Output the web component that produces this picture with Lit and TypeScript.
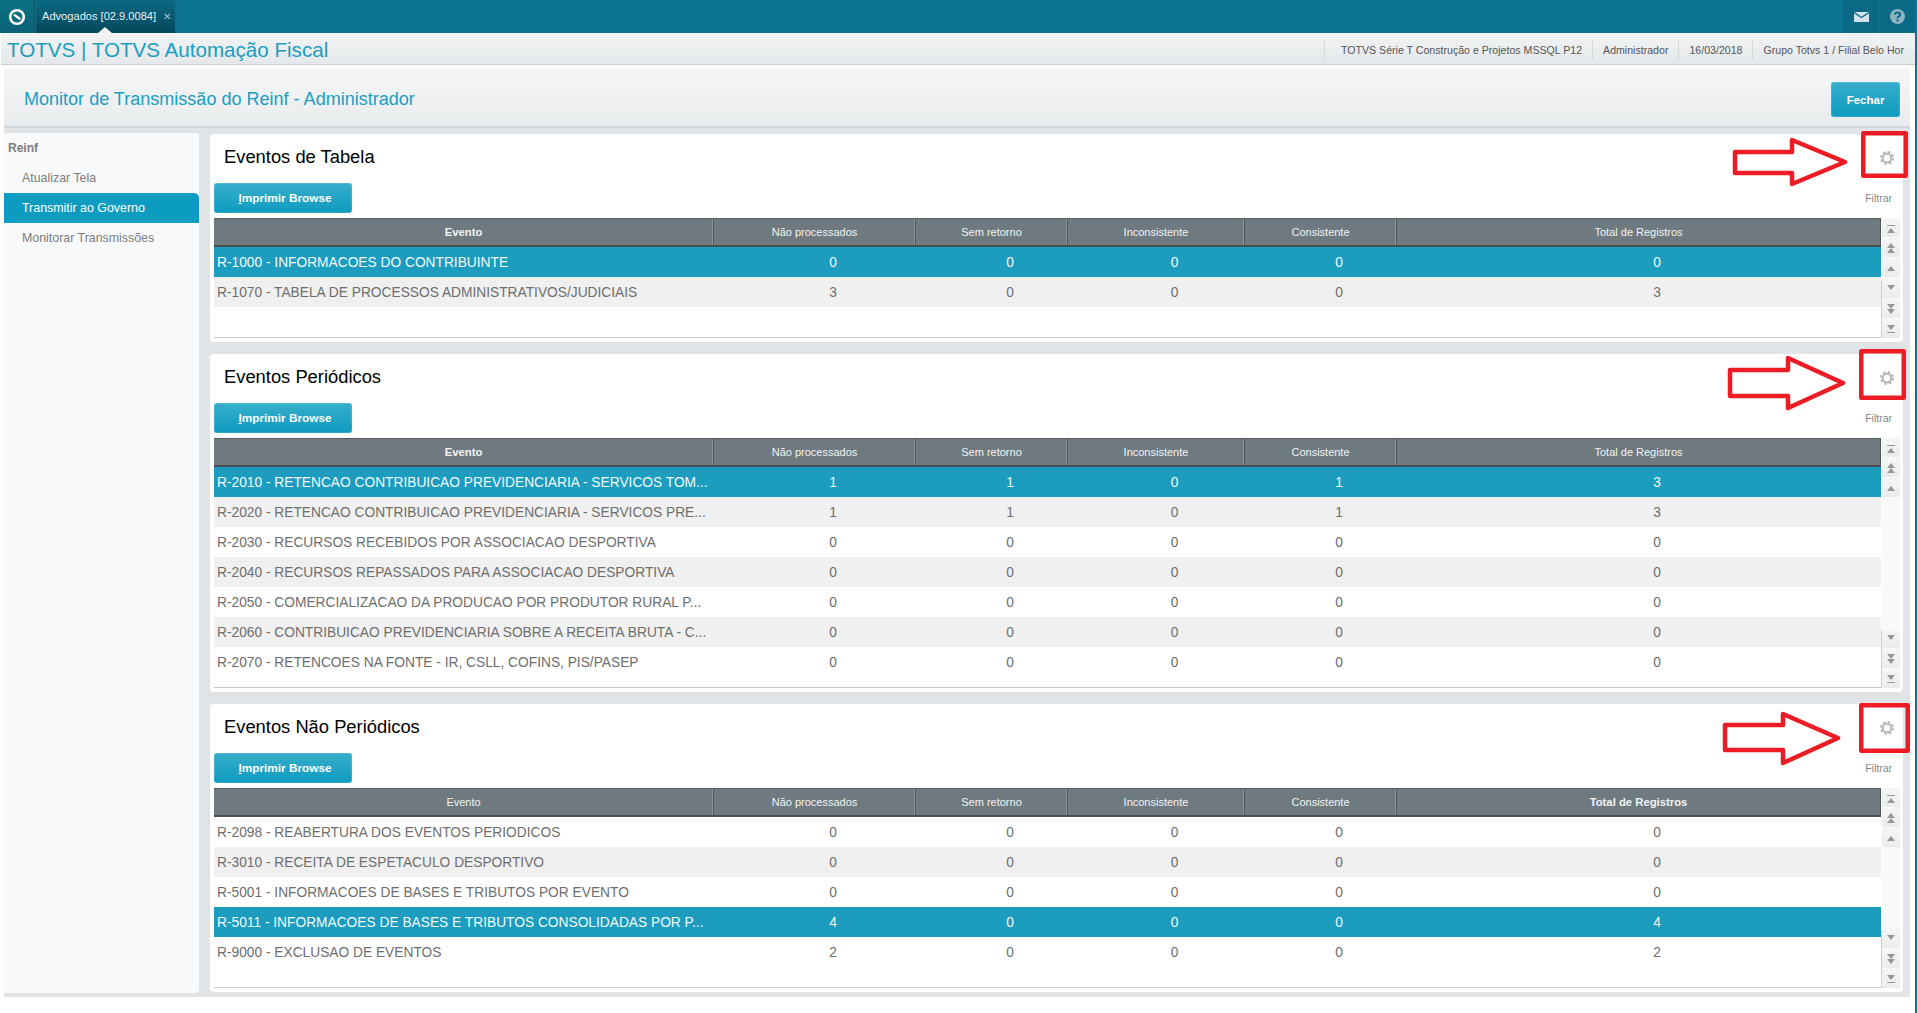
import { LitElement, html, css, svg } from "lit";
import { customElement } from "lit/decorators.js";

type Row = { name: string; vals: number[]; sel?: boolean };
type Card = { title: string; rows: Row[]; bodyH: number; boldCol: number };

const COLS = ["Evento", "Não processados", "Sem retorno", "Inconsistente", "Consistente", "Total de Registros"];

const CARDS: Card[] = [
  {
    title: "Eventos de Tabela", bodyH: 91, boldCol: 0,
    rows: [
      { name: "R-1000 - INFORMACOES DO CONTRIBUINTE", vals: [0, 0, 0, 0, 0], sel: true },
      { name: "R-1070 - TABELA DE PROCESSOS ADMINISTRATIVOS/JUDICIAIS", vals: [3, 0, 0, 0, 3] },
    ],
  },
  {
    title: "Eventos Periódicos", bodyH: 221, boldCol: 0,
    rows: [
      { name: "R-2010 - RETENCAO CONTRIBUICAO PREVIDENCIARIA - SERVICOS TOM...", vals: [1, 1, 0, 1, 3], sel: true },
      { name: "R-2020 - RETENCAO CONTRIBUICAO PREVIDENCIARIA - SERVICOS PRE...", vals: [1, 1, 0, 1, 3] },
      { name: "R-2030 - RECURSOS RECEBIDOS POR ASSOCIACAO DESPORTIVA", vals: [0, 0, 0, 0, 0] },
      { name: "R-2040 - RECURSOS REPASSADOS PARA ASSOCIACAO DESPORTIVA", vals: [0, 0, 0, 0, 0] },
      { name: "R-2050 - COMERCIALIZACAO DA PRODUCAO POR PRODUTOR RURAL P...", vals: [0, 0, 0, 0, 0] },
      { name: "R-2060 - CONTRIBUICAO PREVIDENCIARIA SOBRE A RECEITA BRUTA - C...", vals: [0, 0, 0, 0, 0] },
      { name: "R-2070 - RETENCOES NA FONTE - IR, CSLL, COFINS, PIS/PASEP", vals: [0, 0, 0, 0, 0] },
    ],
  },
  {
    title: "Eventos Não Periódicos", bodyH: 171, boldCol: 5,
    rows: [
      { name: "R-2098 - REABERTURA DOS EVENTOS PERIODICOS", vals: [0, 0, 0, 0, 0] },
      { name: "R-3010 - RECEITA DE ESPETACULO DESPORTIVO", vals: [0, 0, 0, 0, 0] },
      { name: "R-5001 - INFORMACOES DE BASES E TRIBUTOS POR EVENTO", vals: [0, 0, 0, 0, 0] },
      { name: "R-5011 - INFORMACOES DE BASES E TRIBUTOS CONSOLIDADAS POR P...", vals: [4, 0, 0, 0, 4], sel: true },
      { name: "R-9000 - EXCLUSAO DE EVENTOS", vals: [2, 0, 0, 0, 2] },
    ],
  },
];

const tri = (y: number, up: boolean) =>
  up ? svg`<polygon points="5,${y + 5} 13,${y + 5} 9,${y}" />` : svg`<polygon points="5,${y} 13,${y} 9,${y + 5}" />`;

const SCROLL_ICONS = {
  first: svg`<rect x="5" y="7" width="8" height="1" />${tri(10, true)}`,
  pgup: svg`${tri(5, true)}${tri(10, true)}`,
  up: svg`${tri(8, true)}`,
  down: svg`${tri(6, false)}`,
  pgdn: svg`${tri(5, false)}${tri(10, false)}`,
  last: svg`${tri(6, false)}<rect x="5" y="13" width="8" height="1" />`,
};

@customElement("app-root")
export class AppRoot extends LitElement {
  static styles = css`
    :host {
      display: block;
      position: relative;
      width: 1917px;
      height: 1013px;
      overflow: hidden;
      background: #fff;
      font-family: "Liberation Sans", Arial, sans-serif;
    }
    .top {
      height: 33px;
      display: flex;
      background: #0b7290;
    }
    .logo {
      width: 35px;
      background: linear-gradient(#0a7186, #0b6276);
      border-right: 1px solid #0a5567;
      display: flex;
      align-items: center;
      justify-content: center;
      box-sizing: border-box;
    }
    .tab {
      position: relative;
      margin-left: 1px;
      width: 139px;
      box-sizing: border-box;
      padding: 9px 0 0 6px;
      background: linear-gradient(#0b6a84, #04495b);
      color: #e8f1f4;
      font-size: 11.1px;
      line-height: 14px;
      white-space: nowrap;
    }
    .tab .x {
      margin-left: 7px;
      color: #a9c4cc;
      font-size: 10px;
    }
    .notch {
      position: absolute;
      left: 62px;
      bottom: 0;
      width: 0;
      height: 0;
      border-left: 7px solid transparent;
      border-right: 7px solid transparent;
      border-bottom: 6px solid #eef0f2;
    }
    .spacer { flex: 1; }
    .tool {
      width: 36px;
      margin-left: 1px;
      background: #0a6a86;
      display: flex;
      align-items: center;
      justify-content: center;
    }
    .help {
      margin-right: 2px;
      width: 35px;
    }
    .under {
      height: 980px;
      display: flex;
    }
    .col {
      width: 1915px;
      display: flex;
      flex-direction: column;
    }
    .strip {
      width: 2px;
      background: #0b7290;
    }
    .hdr {
      height: 32px;
      box-sizing: border-box;
      padding-top: 3px;
      border-bottom: 1px solid #c6ccd0;
      background: linear-gradient(#f1f3f4, #e5e8ea);
      display: flex;
      align-items: center;
      margin-left: 1px;
    }
    .brand {
      padding-left: 6px;
      color: #1a9ec1;
      font-size: 20.6px;
      flex: 1;
    }
    .info {
      display: flex;
      height: 20px;
      align-items: center;
      margin-right: 1px;
    }
    .info span {
      font-size: 10.6px;
      color: #555;
      height: 20px;
      line-height: 20px;
      padding: 0 10px 0 16px;
      border-left: 1px solid #d5d9dc;
      white-space: nowrap;
    }
    .info span + span { padding-left: 10px; }
    .content {
      margin: 3px 5px 16px 4px;
      flex: 1;
      background: #e0e4e7;
      display: flex;
      flex-direction: column;
      min-height: 0;
    }
    .titlebar {
      height: 60px;
      box-sizing: border-box;
      border-bottom: 2px solid #d3d8db;
      background: linear-gradient(#f5f6f6, #e9ecee);
      display: flex;
      align-items: center;
      justify-content: space-between;
      padding: 5px 10px 0 20px;
    }
    .titlebar h1 {
      margin: 0;
      font-weight: 400;
      font-size: 18.05px;
      color: #1a9ec1;
    }
    .btn {
      border: 0;
      border-radius: 3px;
      background: linear-gradient(#38aecb, #0e9bc0);
      color: #fff;
      font-family: inherit;
      font-weight: 700;
      font-size: 11.5px;
      padding: 0;
      box-shadow: inset 0 0 0 1px rgba(255, 255, 255, 0.12);
    }
    .btn.close { width: 69px; height: 35px; }
    .btn.print { width: 138px; height: 30px; padding-left: 4px; font-size: 11.8px; }
    .body {
      flex: 1;
      display: flex;
      padding: 5px 7px 4px 0;
      min-height: 0;
    }
    .side {
      width: 195px;
      background: #f8f9fb;
      border-radius: 0 0 4px 0;
      padding-top: 1px;
      font-size: 12.4px;
      color: #7d7d7d;
    }
    .side .hd {
      font-weight: 700;
      font-size: 12px;
      padding-left: 4px;
      height: 29px;
      line-height: 29px;
    }
    .side .it {
      height: 30px;
      line-height: 30px;
      padding-left: 18px;
    }
    .side .it.on {
      background: #0d9cc1;
      color: #fff;
      border-radius: 0 5px 0 0;
    }
    .cards {
      margin: 1px 0 0 11px;
      flex: 1;
      display: flex;
      flex-direction: column;
      gap: 12px;
    }
    .card {
      background: #fff;
      border-radius: 4px;
      padding: 0 3px 4px 4px;
    }
    .card-top {
      height: 49px;
      display: flex;
      align-items: center;
      justify-content: space-between;
      padding: 0 5px 3px 10px;
      box-sizing: border-box;
    }
    .card-top h2 {
      margin: 0;
      font-weight: 400;
      font-size: 18.35px;
      color: #000;
    }
    .gear { margin-top: 2px; }
    .actions {
      display: flex;
      justify-content: space-between;
      align-items: center;
      height: 30px;
      margin-bottom: 5px;
    }
    .filter {
      font-size: 10.5px;
      color: #7f858a;
      padding-right: 8px;
    }
    .grid-wrap {
      display: flex;
    }
    .table {
      width: 1667px;
    }
    .thead, .tr {
      display: grid;
      grid-template-columns: 500px 202px 152px 177px 152px 484px;
    }
    .thead {
      height: 29px;
      box-sizing: border-box;
      background: #6e7a7f;
      border-top: 1px solid #555d61;
      border-bottom: 2px solid #474d50;
      color: #f2f4f4;
      font-size: 11px;
    }
    .thead div {
      display: flex;
      align-items: center;
      justify-content: center;
      border-right: 1px solid #4f575a;
      box-shadow: inset -1px 0 0 #8b9599;
    }
    .thead div:last-child { box-shadow: none; }
    .thead .b { font-weight: 700; font-size: 11.3px; }
    .tbody {
      box-sizing: border-box;
      border-bottom: 1px solid #c9c9c9;
      overflow: hidden;
    }
    .tr {
      height: 30px;
      line-height: 32px;
      font-size: 13.75px;
      color: #6e6e6e;
    }
    .tr:nth-child(even) { background: #f0f0f0; }
    .tr.sel { background: #1c9cbe; color: #f2fafc; }
    .tr .nm {
      padding-left: 3px;
      white-space: nowrap;
      overflow: hidden;
    }
    .tr .v {
      text-align: center;
      padding-left: 36px;
      box-sizing: border-box;
    }
    .scroll {
      width: 18px;
      margin-left: 1px;
      background: #f8f9fb;
      display: flex;
      flex-direction: column;
      justify-content: space-between;
    }
    .sg {
      display: flex;
      flex-direction: column;
      gap: 1px;
    }
    .sg.low {
      box-shadow: -1px 0 0 #cfcfcf;
      border-radius: 3px 0 0 0;
    }
    .sb {
      height: 19px;
      display: block;
      background: linear-gradient(#f6f6f6, #ebebeb);
      fill: #979797;
    }
    .overlay {
      position: absolute;
      left: 0;
      top: 0;
      pointer-events: none;
      fill: none;
      stroke: #ed1c24;
      stroke-width: 4.5;
      stroke-linejoin: round;
    }
  `;

  private sb(k: keyof typeof SCROLL_ICONS) {
    return html`<svg class="sb" width="18" height="19" viewBox="0 0 18 19">${SCROLL_ICONS[k]}</svg>`;
  }

  private renderCard(c: Card) {
    return html`
      <section class="card">
        <div class="card-top">
          <h2>${c.title}</h2>
          <svg class="gear" width="16" height="16" viewBox="0 0 16 16" fill="none" stroke="#b9b9b9">
            <circle cx="8" cy="8" r="4.2" stroke-width="2"></circle>
            <circle cx="8" cy="8" r="5.8" stroke-width="2.4" stroke-dasharray="2.5 2.05"></circle>
          </svg>
        </div>
        <div class="actions">
          <button class="btn print"><u>I</u>mprimir Browse</button>
          <span class="filter">Filtrar</span>
        </div>
        <div class="grid-wrap">
          <div class="table">
            <div class="thead">
              ${COLS.map((n, i) => html`<div class=${i === c.boldCol ? "b" : ""}>${n}</div>`)}
            </div>
            <div class="tbody" style="height:${c.bodyH}px">
              ${c.rows.map(
                (r) => html`<div class="tr ${r.sel ? "sel" : ""}">
                  <div class="nm">${r.name}</div>
                  ${r.vals.map((v) => html`<div class="v">${v}</div>`)}
                </div>`
              )}
            </div>
          </div>
          <div class="scroll">
            <div class="sg">${this.sb("first")}${this.sb("pgup")}${this.sb("up")}</div>
            <div class="sg low">${this.sb("down")}${this.sb("pgdn")}${this.sb("last")}</div>
          </div>
        </div>
      </section>
    `;
  }

  render() {
    return html`
      <div class="top">
        <div class="logo">
          <svg width="18" height="18" viewBox="0 0 18 18" fill="none" stroke="#fff">
            <circle cx="9" cy="9" r="6.8" stroke-width="2.6"></circle>
            <path d="M6 6.6 L12.4 11.2" stroke-width="2.4"></path>
          </svg>
        </div>
        <div class="tab">Advogados [02.9.0084]<span class="x">✕</span><span class="notch"></span></div>
        <div class="spacer"></div>
        <div class="tool">
          <svg width="15" height="10" viewBox="0 0 15 10">
            <rect width="15" height="10" fill="#d3e2e8"></rect>
            <path d="M0 0.5 L7.5 5.5 L15 0.5" fill="none" stroke="#0a6a86" stroke-width="1.4"></path>
          </svg>
        </div>
        <div class="tool help">
          <svg width="15" height="15" viewBox="0 0 16 16">
            <circle cx="8" cy="8" r="8" fill="#8fb3c1"></circle>
            <path d="M5.2 6 C5.4 3 10.8 3 10.8 6 C10.8 7.8 8 7.8 8 9.8" fill="none" stroke="#0a6a86" stroke-width="2.2"></path>
            <rect x="6.9" y="11" width="2.2" height="2.2" fill="#0a6a86"></rect>
          </svg>
        </div>
      </div>
      <div class="under">
        <div class="col">
          <div class="hdr">
            <div class="brand">TOTVS | TOTVS Automação Fiscal</div>
            <div class="info">
              <span>TOTVS Série T Construção e Projetos MSSQL P12</span>
              <span>Administrador</span>
              <span>16/03/2018</span>
              <span>Grupo Totvs 1 / Filial Belo Hor</span>
            </div>
          </div>
          <div class="content">
            <div class="titlebar">
              <h1>Monitor de Transmissão do Reinf - Administrador</h1>
              <button class="btn close">Fechar</button>
            </div>
            <div class="body">
              <nav class="side">
                <div class="hd">Reinf</div>
                <div class="it">Atualizar Tela</div>
                <div class="it on">Transmitir ao Governo</div>
                <div class="it">Monitorar Transmissões</div>
              </nav>
              <div class="cards">${CARDS.map((c) => this.renderCard(c))}</div>
            </div>
          </div>
        </div>
        <div class="strip"></div>
      </div>
      <svg class="overlay" width="1917" height="1013" viewBox="0 0 1917 1013">
        <rect x="1863.25" y="133.25" width="42.5" height="42.5"></rect>
        <polygon points="1735,152 1792,152 1792,140 1845,162 1792,184 1792,173 1735,173"></polygon>
        <rect x="1861.25" y="351.25" width="42.5" height="46.5"></rect>
        <polygon points="1730,370 1788,370 1788,358 1843,383 1788,408 1788,396 1730,396"></polygon>
        <rect x="1861.25" y="705.25" width="46.5" height="45.5"></rect>
        <polygon points="1725,725 1783,725 1783,714 1838,738 1783,763 1783,750 1725,750"></polygon>
      </svg>
    `;
  }
}
